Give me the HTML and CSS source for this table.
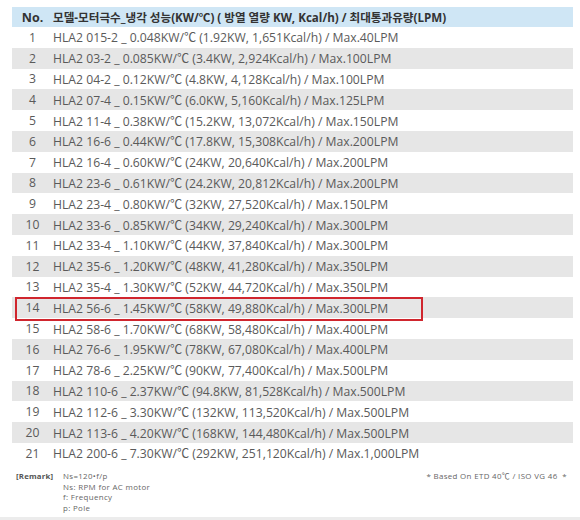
FILE: index.html
```html
<!DOCTYPE html>
<html lang="ko">
<head>
<meta charset="utf-8">
<link rel="stylesheet" href="styles.css">
</head>
<body>
<div class="page">
  <div class="table">
    <div class="row head"><span class="no">No.</span><span class="desc">모델-모터극수_냉각 성능(KW/℃) ( 방열 열량 KW, Kcal/h) / 최대통과유량(LPM)</span></div>
    <div class="row"><span class="no">1</span><span class="desc">HLA2 015-2 _ 0.048KW/℃ (1.92KW, 1,651Kcal/h) / Max.40LPM</span></div>
    <div class="row alt"><span class="no">2</span><span class="desc">HLA2 03-2 _ 0.085KW/℃ (3.4KW, 2,924Kcal/h) / Max.100LPM</span></div>
    <div class="row"><span class="no">3</span><span class="desc">HLA2 04-2 _ 0.12KW/℃ (4.8KW, 4,128Kcal/h) / Max.100LPM</span></div>
    <div class="row alt"><span class="no">4</span><span class="desc">HLA2 07-4 _ 0.15KW/℃ (6.0KW, 5,160Kcal/h) / Max.125LPM</span></div>
    <div class="row"><span class="no">5</span><span class="desc">HLA2 11-4 _ 0.38KW/℃ (15.2KW, 13,072Kcal/h) / Max.150LPM</span></div>
    <div class="row alt"><span class="no">6</span><span class="desc">HLA2 16-6 _ 0.44KW/℃ (17.8KW, 15,308Kcal/h) / Max.200LPM</span></div>
    <div class="row"><span class="no">7</span><span class="desc">HLA2 16-4 _ 0.60KW/℃ (24KW, 20,640Kcal/h) / Max.200LPM</span></div>
    <div class="row alt"><span class="no">8</span><span class="desc">HLA2 23-6 _ 0.61KW/℃ (24.2KW, 20,812Kcal/h) / Max.200LPM</span></div>
    <div class="row"><span class="no">9</span><span class="desc">HLA2 23-4 _ 0.80KW/℃ (32KW, 27,520Kcal/h) / Max.150LPM</span></div>
    <div class="row alt"><span class="no">10</span><span class="desc">HLA2 33-6 _ 0.85KW/℃ (34KW, 29,240Kcal/h) / Max.300LPM</span></div>
    <div class="row"><span class="no">11</span><span class="desc">HLA2 33-4 _ 1.10KW/℃ (44KW, 37,840Kcal/h) / Max.300LPM</span></div>
    <div class="row alt"><span class="no">12</span><span class="desc">HLA2 35-6 _ 1.20KW/℃ (48KW, 41,280Kcal/h) / Max.350LPM</span></div>
    <div class="row"><span class="no">13</span><span class="desc">HLA2 35-4 _ 1.30KW/℃ (52KW, 44,720Kcal/h) / Max.350LPM</span></div>
    <div class="row alt marked"><span class="no">14</span><span class="desc">HLA2 56-6 _ 1.45KW/℃ (58KW, 49,880Kcal/h) / Max.300LPM</span><span class="mark"></span></div>
    <div class="row"><span class="no">15</span><span class="desc">HLA2 58-6 _ 1.70KW/℃ (68KW, 58,480Kcal/h) / Max.400LPM</span></div>
    <div class="row alt"><span class="no">16</span><span class="desc">HLA2 76-6 _ 1.95KW/℃ (78KW, 67,080Kcal/h) / Max.400LPM</span></div>
    <div class="row"><span class="no">17</span><span class="desc">HLA2 78-6 _ 2.25KW/℃ (90KW, 77,400Kcal/h) / Max.500LPM</span></div>
    <div class="row alt"><span class="no">18</span><span class="desc">HLA2 110-6 _ 2.37KW/℃ (94.8KW, 81,528Kcal/h) / Max.500LPM</span></div>
    <div class="row"><span class="no">19</span><span class="desc">HLA2 112-6 _ 3.30KW/℃ (132KW, 113,520Kcal/h) / Max.500LPM</span></div>
    <div class="row alt"><span class="no">20</span><span class="desc">HLA2 113-6 _ 4.20KW/℃ (168KW, 144,480Kcal/h) / Max.500LPM</span></div>
    <div class="row"><span class="no">21</span><span class="desc">HLA2 200-6 _ 7.30KW/℃ (292KW, 251,120Kcal/h) / Max.1,000LPM</span></div>
  </div>
  <div class="remark">
    <div class="remark-label">[Remark]</div>
    <div class="remark-lines">
      <div>Ns=120•f/p</div>
      <div>Ns: RPM for AC motor</div>
      <div>f: Frequency</div>
      <div>p: Pole</div>
    </div>
    <div class="remark-note">* Based On ETD 40℃ / ISO VG 46 &nbsp;*</div>
  </div>
  <div class="bottom-strip"></div>
</div>
</body>
</html>
```

FILE: styles.css
```css
html, body {
  margin: 0;
  padding: 0;
  background: #ffffff;
}

.page {
  width: 580px;
  height: 520px;
  position: relative;
  overflow: hidden;
  font-family: "Open Sans", "Noto Sans CJK KR", sans-serif;
  color: #5a5a5a;
}

.table {
  margin: 7px 0 0 12px;
  width: 561px;
}

.row {
  display: flex;
  align-items: center;
  height: 20.8px;
  font-size: 12.2px;
  white-space: nowrap;
  position: relative;
}

.row.head {
  height: 20px;
  background: #cfe6f5;
  color: #333333;
  font-weight: 700;
  font-size: 11.6px;
}

.row.head .no {
  font-size: 12.5px;
}

.row.alt {
  background: #e6e6e6;
}

.no {
  width: 41px;
  text-align: center;
}

.mark {
  position: absolute;
  left: 3px;
  top: 0;
  width: 408px;
  height: 24px;
  border: 2px solid #d0262e;
  box-sizing: border-box;
}

.remark {
  display: flex;
  margin-top: 7px;
  padding-left: 16px;
  font-size: 7.9px;
  letter-spacing: 0.35px;
  color: #666666;
}

.remark-label {
  width: 47px;
  font-size: 7.8px;
  letter-spacing: 0.2px;
  font-weight: 700;
  color: #555555;
  line-height: 10.8px;
}

.remark-lines {
  line-height: 10.8px;
}

.remark-note {
  margin-left: auto;
  margin-right: 13px;
  line-height: 10.8px;
}

.bottom-strip {
  position: absolute;
  left: 0;
  right: 0;
  bottom: 0;
  height: 3px;
  background: #ececec;
}
```
